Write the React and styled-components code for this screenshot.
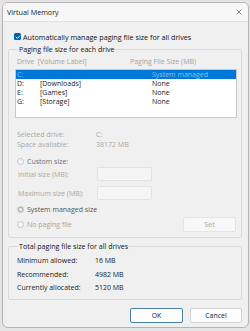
import React from "react";
import styled, { createGlobalStyle } from "styled-components";

const GlobalStyle = createGlobalStyle`
  html, body {
    margin: 0;
    padding: 0;
    background: #e4e4e4;
  }
  body {
    font-family: "Open Sans", "Noto Sans", sans-serif;
    font-size: 7px;
  }
`;

const drives = [
  { letter: "C:", label: "", size: "System managed", selected: true },
  { letter: "D:", label: "[Downloads]", size: "None" },
  { letter: "E:", label: "[Games]", size: "None" },
  { letter: "G:", label: "[Storage]", size: "None" },
];

export default function App() {
  return (
    <>
      <GlobalStyle />
      <Window>
        <TitleBar>
          <Title>Virtual Memory</Title>
          <CloseIcon viewBox="0 0 10 10">
            <path d="M1 1 L9 9 M9 1 L1 9" stroke="#333" strokeWidth="1" />
          </CloseIcon>
        </TitleBar>

        <Body>
          <CheckRow>
            <CheckBox>
              <svg viewBox="0 0 8 8" width="6" height="6">
                <path
                  d="M1.2 4.2 L3.2 6 L6.8 2"
                  stroke="#fff"
                  strokeWidth="1.2"
                  fill="none"
                />
              </svg>
            </CheckBox>
            Automatically manage paging file size for all drives
          </CheckRow>

          <Group $height={193} $top={4}>
            <Legend>Paging file size for each drive</Legend>
            <ColumnHeader>
              <span>Drive&nbsp;&nbsp;[Volume Label]</span>
              <span>Paging File Size (MB)</span>
            </ColumnHeader>
            <ListBox>
              {drives.map((d) => (
                <DriveRow key={d.letter} $selected={d.selected}>
                  <span>{d.letter}</span>
                  <span>{d.label}</span>
                  <span>{d.size}</span>
                </DriveRow>
              ))}
            </ListBox>

            <InfoGrid>
              <Dim>Selected drive:</Dim>
              <Dim>C:</Dim>
              <Dim>Space available:</Dim>
              <Dim>38172 MB</Dim>
            </InfoGrid>

            <RadioRow $color="#6e6e6e" $top={8}>
              <Radio />
              Custom size:
            </RadioRow>

            <SizeRow $top={1}>
              <Dim>Initial size (MB):</Dim>
              <SizeInput />
            </SizeRow>
            <SizeRow $top={5}>
              <Dim>Maximum size (MB):</Dim>
              <SizeInput />
            </SizeRow>

            <RadioRow $color="#555" $top={5}>
              <Radio $checked />
              System managed size
            </RadioRow>

            <LastRow>
              <RadioRow $color="#a3a3a3" $top={0}>
                <Radio />
                No paging file
              </RadioRow>
              <SetButton>Set</SetButton>
            </LastRow>
          </Group>

          <Group $height={58} $top={4}>
            <Legend>Total paging file size for all drives</Legend>
            <TotalGrid>
              <span>Minimum allowed:</span>
              <span>16 MB</span>
              <span>Recommended:</span>
              <span>4982 MB</span>
              <span>Currently allocated:</span>
              <span>5120 MB</span>
            </TotalGrid>
          </Group>

          <Footer>
            <DialogButton $default>OK</DialogButton>
            <DialogButton>Cancel</DialogButton>
          </Footer>
        </Body>
      </Window>
    </>
  );
}

const Window = styled.div`
  box-sizing: border-box;
  margin: 2px 1px 0 2px;
  width: 247px;
  height: 326px;
  border: 1px solid #b4b4b4;
  border-radius: 6px;
  overflow: hidden;
  display: flex;
  flex-direction: column;
  background: #f0f0f0;
  color: #1a1a1a;
`;

const TitleBar = styled.div`
  height: 17px;
  flex-shrink: 0;
  display: flex;
  align-items: center;
  justify-content: space-between;
  padding: 0 6px 1px 4px;
  background: #f7f7f7;
`;

const Title = styled.span`
  font-size: 7.2px;
  color: #222;
`;

const CloseIcon = styled.svg`
  width: 6px;
  height: 6px;
`;

const Body = styled.div`
  flex: 1;
  padding: 0 6px 0 5px;
  display: flex;
  flex-direction: column;
  border-top: 1px solid #e2e2e2;
`;

const CheckRow = styled.div`
  display: flex;
  align-items: center;
  gap: 2px;
  margin: 10px 0 0 6px;
  height: 9px;
  color: #111;
  font-size: 7.2px;
`;

const CheckBox = styled.span`
  width: 7px;
  height: 7px;
  border-radius: 1.5px;
  background: #0063b1;
  display: flex;
  align-items: center;
  justify-content: center;
`;

const Group = styled.fieldset`
  box-sizing: border-box;
  margin: ${(p) => p.$top}px 0 0 0;
  padding: 0 4px 0 6px;
  height: ${(p) => p.$height}px;
  border: 1px solid #dadada;
  border-radius: 2px;
  display: flex;
  flex-direction: column;
  min-width: 0;
`;

const Legend = styled.legend`
  padding: 0 1px;
  margin-left: 3px;
  font-size: 7.1px;
  color: #111;
  line-height: 9px;
`;

const ColumnHeader = styled.div`
  display: grid;
  grid-template-columns: 113px 1fr;
  color: #a3a3a3;
  margin: 3px 0 0 2px;
  height: 9px;
  line-height: 9px;
`;

const ListBox = styled.div`
  box-sizing: border-box;
  margin: 3px 0 0 0;
  height: 49px;
  background: #fff;
  border: 1px solid #c8c8c8;
  display: flex;
  flex-direction: column;
`;

const DriveRow = styled.div`
  display: grid;
  grid-template-columns: 23px 112px 1fr;
  height: 9px;
  line-height: 9px;
  padding-left: 1px;
  background: ${(p) => (p.$selected ? "#0078d7" : "transparent")};
  color: ${(p) => (p.$selected ? "#8fc0ec" : "#222")};
`;

const InfoGrid = styled.div`
  display: grid;
  grid-template-columns: 79px 1fr;
  row-gap: 1px;
  margin: 12px 0 0 2px;
  line-height: 9px;
`;

const Dim = styled.span`
  color: #a8a8a8;
`;

const RadioRow = styled.div`
  display: flex;
  align-items: center;
  gap: 3px;
  height: 9px;
  margin: ${(p) => p.$top}px 0 0 2px;
  color: ${(p) => p.$color};
`;

const Radio = styled.span`
  box-sizing: border-box;
  width: 7px;
  height: 7px;
  border-radius: 50%;
  border: 1px solid #c4c4c4;
  background: ${(p) =>
    p.$checked
      ? "radial-gradient(circle, #f4f4f4 0 1.3px, #b8b8b8 1.6px)"
      : "#f7f7f7"};
`;

const SizeRow = styled.div`
  display: grid;
  grid-template-columns: 79px 55px;
  align-items: center;
  margin: ${(p) => p.$top}px 0 0 3px;
`;

const SizeInput = styled.div`
  box-sizing: border-box;
  height: 14px;
  background: #f5f5f5;
  border: 1px solid #e3e3e3;
  border-radius: 2px;
`;

const LastRow = styled.div`
  display: flex;
  align-items: center;
  justify-content: space-between;
  height: 15px;
  margin-top: 3px;
  padding-right: 1px;
`;

const SetButton = styled.div`
  box-sizing: border-box;
  width: 53px;
  height: 15px;
  display: flex;
  align-items: center;
  justify-content: center;
  background: #f8f8f8;
  border: 1px solid #e4e4e4;
  border-radius: 2px;
  color: #a3a3a3;
`;

const TotalGrid = styled.div`
  display: grid;
  grid-template-columns: 78px 1fr;
  row-gap: 4.5px;
  margin: 5px 0 0 2px;
  line-height: 9px;
  color: #222;
`;

const Footer = styled.div`
  display: flex;
  justify-content: flex-end;
  gap: 7px;
  margin-top: 8px;
`;

const DialogButton = styled.div`
  box-sizing: border-box;
  width: ${(p) => (p.$default ? 53 : 52)}px;
  height: 15px;
  display: flex;
  align-items: center;
  justify-content: center;
  background: #fdfdfd;
  border: 1px solid ${(p) => (p.$default ? "#4a7fa6" : "#d2d2d2")};
  border-radius: 2px;
  color: #1a1a1a;
`;
